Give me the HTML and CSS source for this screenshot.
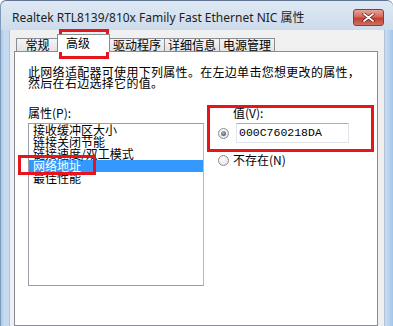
FILE: index.html
```html
<!DOCTYPE html>
<html lang="zh-CN">
<head>
    <meta charset="UTF-8">
    <title>Realtek RTL8139/810x Family Fast Ethernet NIC 属性</title>
    <link rel="stylesheet" href="styles.css">
</head>
<body>
    <div class="window">
        <div class="titlebar">
            <span class="title">Realtek RTL8139/810x Family Fast Ethernet NIC 属性</span>
            <span class="close">
                <svg width="13" height="9" viewBox="0 0 13 9">
                    <path d="M2 1 L11 8 M11 1 L2 8" stroke="#5a1a1a" stroke-width="3.2" stroke-linecap="round"/>
                    <path d="M2 1 L11 8 M11 1 L2 8" stroke="#fff" stroke-width="1.8" stroke-linecap="round"/>
                </svg>
            </span>
        </div>
        <div class="dialog">
            <div class="tabs">
                <div class="tab">常规</div>
                <div class="tab active">高级</div>
                <div class="tab">驱动程序</div>
                <div class="tab">详细信息</div>
                <div class="tab">电源管理</div>
            </div>
            <div class="panel">
                <p class="desc">此网络适配器可使用下列属性。在左边单击您想更改的属性，<br>然后在右边选择它的值。</p>
                <div class="columns">
                    <div class="col-left">
                        <div class="label">属性(P):</div>
                        <ul class="listbox">
                            <li>接收缓冲区大小</li>
                            <li>链接关闭节能</li>
                            <li>链接速度/双工模式</li>
                            <li class="selected">网络地址</li>
                            <li>最佳性能</li>
                        </ul>
                    </div>
                    <div class="col-right">
                        <div class="label value-label">值(V):</div>
                        <div class="value-row">
                            <span class="radio checked"></span>
                            <div class="textbox">000C760218DA</div>
                        </div>
                        <div class="absent-row">
                            <span class="radio"></span>
                            <span>不存在(N)</span>
                        </div>
                    </div>
                </div>
            </div>
        </div>
    </div>

    <!-- red annotation boxes drawn over the dialog -->
    <div class="mark mark-tab"></div>
    <div class="mark mark-item"></div>
    <div class="mark mark-value"></div>
</body>
</html>
```

FILE: styles.css
```css
body {
    margin: 0;
    width: 393px;
    height: 326px;
    overflow: hidden;
    position: relative;
    background: #fff;
    font-family: "Noto Sans CJK SC", "Noto Sans", sans-serif;
    font-size: 12px;
    color: #000;
}
.window {
    box-sizing: border-box;
    height: 326px;
    padding: 0 8px 0 8px;
    border-top: 1px solid #5f7590;
    border-left: 1px solid #7f9ab8;
    border-radius: 6px 6px 0 0;
    background: linear-gradient(to right, #a9c6e6 0, #c6dbf1 3px, #c6dbf1 385px, #b2cfee 389px, #9ec2ea 393px);
    display: flex;
    flex-direction: column;
}
.titlebar {
    height: 29px;
    margin: 0 -8px;
    padding: 0 9px 0 11px;
    display: flex;
    align-items: center;
    justify-content: space-between;
    background: linear-gradient(#dfe9f5, #cddbeb);
    border-radius: 6px 6px 0 0;
}
.title {
    font-family: "Noto Sans", "Noto Sans CJK SC", sans-serif;
    font-size: 12px;
    color: #1e1e1e;
    padding-top: 2px;
}
.close {
    width: 29px;
    height: 15px;
    margin-top: 4px;
    border: 1px solid #8a3a3a;
    border-radius: 3px;
    background: linear-gradient(#e6a59b 0, #d6685c 45%, #c2402f 55%, #d0705f 100%);
    display: flex;
    align-items: center;
    justify-content: center;
}
.dialog {
    flex: 1;
    display: flex;
    flex-direction: column;
    background: #f0f0f0;
    border-left: 1px solid #b3c2d4;
    border-right: 1px solid #b3c2d4;
    padding: 0 6px 0 4px;
}
.tabs {
    height: 21px;
    display: flex;
    align-items: flex-end;
    padding-left: 2px;
}
.tab {
    box-sizing: border-box;
    min-width: 43px;
    height: 13px;
    line-height: 12px;
    padding: 0 3px;
    text-align: center;
    border: 1px solid #898c95;
    border-bottom: none;
    margin-right: -1px;
    background: linear-gradient(#f5f5f5, #e3e3e3);
    white-space: nowrap;
}
.tab.active {
    position: relative;
    z-index: 1;
    width: 53px;
    height: 18px;
    margin: 0 -1px -1px -1px;
    padding: 2px 0 0 8px;
    text-align: left;
    background: #fff;
}
.panel {
    flex: 1;
    background: #fff;
    border: 1px solid #898c95;
    padding: 14px 12px 0 13px;
}
.desc {
    margin: 0;
    line-height: 11px;
    letter-spacing: 0.3px;
    white-space: nowrap;
}
.columns {
    display: flex;
    margin-top: 19px;
}
.col-left {
    width: 176px;
}
.label {
    line-height: 12px;
    height: 12px;
    margin-bottom: 4px;
}
.listbox {
    box-sizing: border-box;
    height: 163px;
    margin: 0;
    padding: 0;
    list-style: none;
    border: 1px solid #9a9ea6;
    border-right-color: #b7bac0;
}
.listbox li {
    line-height: 12px;
    height: 12px;
    padding-left: 4px;
    white-space: nowrap;
}
.listbox li.selected {
    background: #3399ff;
    color: #fff;
}
.col-right {
    padding-left: 14px;
}
.value-label {
    margin-left: 15px;
}
.value-row {
    display: flex;
    align-items: center;
    gap: 7px;
}
.radio {
    box-sizing: border-box;
    width: 11px;
    height: 11px;
    border-radius: 50%;
    border: 1px solid #8e8f8f;
    background: radial-gradient(circle at 40% 35%, #ffffff, #dcdcdc);
    position: relative;
}
.radio.checked::after {
    content: "";
    position: absolute;
    left: 2px;
    top: 2px;
    width: 5px;
    height: 5px;
    border-radius: 50%;
    background: radial-gradient(circle at 40% 35%, #9fb7d6, #2c4a74);
}
.textbox {
    box-sizing: border-box;
    width: 113px;
    height: 20px;
    border: 1px solid #e2e3ea;
    border-top-color: #abadb3;
    padding-left: 2px;
    line-height: 18px;
    font-family: "Liberation Mono", monospace;
    font-size: 11.5px;
}
.absent-row {
    display: flex;
    align-items: center;
    gap: 4px;
    margin-top: 11px;
    line-height: 12px;
}
.mark {
    position: absolute;
    box-sizing: border-box;
    border: 3px solid #e8141c;
}
.mark-tab {
    left: 59px;
    top: 29px;
    width: 50px;
    height: 30px;
}
.mark-item {
    left: 18px;
    top: 155px;
    width: 78px;
    height: 20px;
}
.mark-value {
    left: 207px;
    top: 105px;
    width: 167px;
    height: 47px;
}
```
